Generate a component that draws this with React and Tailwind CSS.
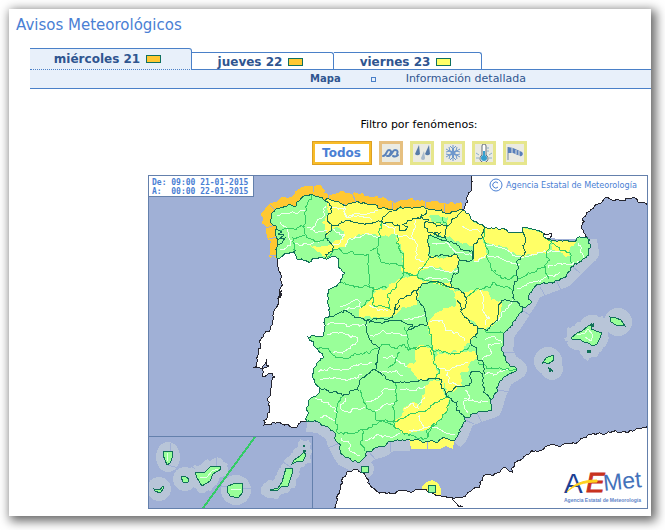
import React from "react";

const tabs = [
  { label: "miércoles 21", level: "orange", active: true },
  { label: "jueves 22", level: "orange", active: false },
  { label: "viernes 23", level: "yellow", active: false },
];

// Coordinates of the map are x,y pairs on a 500 x 334 canvas that starts at 148,175
const SPAIN =
  "271,219 271,214 277,208 286,207 295,207 297,202 300,200 304,196 310,194 318,196 325,201 340,203 355,203 367,204 382,208 393,210 404,208 415,207 428,209 437,211 445,213 455,212 462,210 470,216 472,220 485,227 497,228 513,232 523,232 523,227 532,229 543,233 547,239 560,240 570,242 577,238 587,237 588,243 591,246 589,253 578,263 570,271 563,278 548,283 533,289 528,299 532,302 523,307 520,313 513,322 505,332 503,343 503,352 508,363 517,369 503,378 497,392 490,400 492,410 477,413 465,418 461,428 458,435 453,441 445,438 438,442 427,441 410,440 390,441 382,447 368,451 365,457 358,463 345,457 340,450 337,442 335,433 328,427 320,423 307,422 306,408 311,398 320,392 319,387 313,378 314,368 323,358 316,348 308,337 323,336 324,328 325,318 329,316 329,293 328,290 338,284 345,273 338,265 337,258 323,258 310,262 298,260 295,251 286,253 277,258 277,247 278,241 275,235 277,228 273,225";

const PORTUGAL =
  "277,258 278,267 281,278 281,287 278,298 282,290 279,302 273,320 268,332 260,343 258,355 255,367 262,368 265,364 267,359 269,366 262,368 262,376 272,373 275,377 272,380 271,395 270,410 264,425 273,422 282,424 293,427 300,423 307,422";

const FRANCE_WEST = "473,175 471,188 468,202 462,210";
const FRANCE_EAST = "587,237 582,225 583,218 588,212 598,204 607,197 612,200 624,201 626,198 633,197 638,202 648,205";
const AFRICA =
  "333,509 340,490 347,472 358,470 365,475 370,485 378,492 392,494 402,491 410,492 423,489 432,493 442,497 452,497 463,497 477,488 483,477 497,473 503,468 512,472 518,460 530,453 550,445 573,442 580,440 593,433 602,434 615,430 630,430 648,426";

const EAST_COAST =
  "587,240 589,253 578,263 563,278 533,289 528,299 513,322 505,332 503,352 508,363 517,369 503,378 497,392 492,408 477,413 465,418 458,435 453,441";
const SOUTH_COAST = "410,441 390,441 382,447 368,451 358,463 345,457 337,442 335,433 320,423 307,422";

const ORANGE_SEA =
  "270,258 270,240 266,230 266,226 262,224 262,212 268,205 280,198 290,197 300,189 308,186 318,185 328,194 352,194 354,192 362,193 372,197 393,202 413,198 427,202 437,201 447,204 461,202 462,213 445,216 415,211 393,214 355,207 325,205 310,198 300,204 295,210 277,212 275,218 277,226 279,235 281,247 277,258";

const YELLOW_ZONES = [
  // cantabrian strip, Leon, Burgos, Alava and Navarra
  "325,200 355,201 382,206 393,208 415,205 445,211 462,208 472,218 485,227 482,238 474,247 465,243 447,237 428,235 428,255 441,258 457,255 459,262 453,272 447,271 436,268 418,272 412,275 402,272 403,255 397,242 397,235 381,236 365,234 357,235 350,238 345,247 332,250 327,258 318,252 310,245 332,243 340,240 345,235 341,229 332,229 326,238 325,228 322,222 329,215",
  "474,245 482,238 487,257 475,262 472,255",
  // Pyrenees
  "485,227 497,227 513,231 523,227 543,233 547,239 552,242 548,252 525,256 523,257 510,252 505,247 497,246 485,243 482,238",
  "551,240 560,240 570,241 577,239 570,249 571,257 566,257 560,250 551,251",
  // central range
  "375,288 387,288 400,279 412,275 427,280 450,282 456,290 450,290 440,285 423,283 418,291 417,305 402,307 397,314 387,317 358,318 361,308 370,300",
  // Teruel
  "453,290 463,293 473,290 480,288 489,292 491,300 501,301 498,320 486,331 478,327 463,315 456,307 454,298",
  // Cuenca
  "457,305 463,315 470,322 478,328 476,336 470,343 460,352 445,352 432,350 431,337 428,327 430,319 438,312 446,308",
  // Albacete
  "437,352 460,352 475,349 478,360 470,363 468,372 460,373 462,385 452,391 447,395 442,380 435,380 440,370 433,362",
  // Ciudad Real
  "417,348 425,346 435,349 433,363 438,372 435,380 420,380 413,372 407,367 410,363 416,362",
  // Jaen and Granada
  "432,381 442,380 444,393 449,398 448,410 438,422 432,427 427,430 408,434 400,430 394,427 395,420 402,415 403,408 413,402 420,406 425,390",
];

const GREEN_ZONES = [
  "429,217 438,215 448,217 446,225 438,223 433,223",
  "430,236 440,237 460,245 472,250 472,259 461,260 460,252 448,247 435,243",
  "421,270 433,267 447,271 453,274 451,280 432,277 418,274",
];

const COMMUNITY_LINES = [
  "325,201 332,211 327,218 332,226 326,238 333,248 325,258",
  "332,225 345,221 357,222 368,223 380,222 387,214 392,211",
  "381,221 392,222 400,226 399,230 405,231 408,227 402,225 410,220 416,219 422,215 427,210",
  "422,214 423,219 429,220 424,226 428,232 437,236 446,239 447,226 455,218 462,211",
  "434,232 440,233 438,236 434,234",
  "447,226 440,226 428,222",
  "428,236 428,255 434,257 443,255 449,257 457,255 460,260 472,260 474,253 463,250 456,243 447,241 437,238 428,236",
  "485,227 482,238 473,247 472,258",
  "460,260 458,273 452,278 451,287 460,290 467,298 465,308 460,310",
  "452,287 442,283 433,281 424,283 417,290 405,297 395,305 396,310 400,305",
  "395,307 393,318 380,318 367,320 378,323 392,321 403,322 413,325 408,330 418,326 427,325",
  "418,288 417,300 424,308 426,317 427,325",
  "323,318 335,315 345,310 352,315 367,320 366,330 373,344 380,348 378,358 375,370 360,380 358,390 354,390 343,396 333,392 320,388",
  "375,370 385,376 395,383 410,382 425,380 442,380 441,388 446,395 457,402 456,410 465,418",
  "446,395 460,387 471,383 470,375 476,371 483,374 483,392 491,400",
  "457,300 463,315 470,323 478,328 476,337 470,343 477,350 478,360 484,364 485,374",
  "478,328 487,331 498,320 498,309 502,300 515,301 523,307",
  "523,232 525,243 524,255 518,260 517,272 518,278 513,287 515,300",
];

const PROVINCE_LINES = [
  "312,195 307,205 305,222 306,235 318,242 329,238",
  "280,231 290,228 305,226",
  "305,236 293,238 295,251",
  "327,258 335,249 350,252 368,254 369,268 370,287 387,288",
  "370,251 378,246 382,222",
  "378,248 381,262 392,263 402,265 403,273 412,275",
  "397,235 396,243 404,255 404,273 418,274 430,257",
  "340,282 352,285 364,286 374,288 370,300 361,308",
  "373,288 373,305 382,306 390,309 387,295 397,283 403,273",
  "417,275 427,280 440,283 452,287",
  "433,223 441,224 447,226 442,217",
  "485,227 484,240 486,256 490,267 500,275 507,279 517,275",
  "467,297 475,290 490,288 493,282 505,287 513,291",
  "518,278 532,272 545,268 550,260 546,252 552,242 548,240",
  "546,266 548,279",
  "552,243 560,250 570,253 572,263",
  "315,347 325,348 333,355 345,358 358,355 370,353 380,347 384,344 392,348 404,344 408,350 417,348",
  "405,327 408,340 409,350 420,347 432,347 432,355",
  "428,326 431,338 432,350 445,351 460,353 470,345",
  "434,350 434,364 440,371 435,380",
  "360,390 364,400 366,408 375,412 376,420 382,420",
  "395,383 397,397 394,410 396,428",
  "343,396 337,405 337,432",
  "337,432 350,434 362,430 372,427 382,421 395,422 412,413 430,408 440,400 449,395",
  "362,430 360,443 365,451",
  "383,421 393,425 403,433 427,438 432,427 440,420 448,410 449,400",
  "428,438 427,430 435,423",
  "485,330 492,333 503,333",
  "478,362 490,369 516,369",
  "388,368 400,352",
];

const ZONE_LINES = [
  "277,215 295,213 305,211",
  "280,222 288,229 291,245 280,250",
  "293,243 308,245 322,240",
  "307,228 318,232 327,230",
  "326,206 322,218 310,230",
  "329,209 345,208 345,215 360,214 378,210",
  "345,206 347,218 362,216 372,220",
  "333,229 345,235 340,243 332,243",
  "345,247 350,238 365,234 381,236",
  "383,225 395,228 397,235 407,236 415,239",
  "397,235 396,243 404,255",
  "415,220 412,235 418,245 415,258 424,262",
  "432,243 445,243 460,252 472,256",
  "418,269 433,267 447,272 458,270",
  "425,280 436,278 452,281",
  "462,226 472,230 480,232",
  "474,262 490,257 500,258 510,262 520,264",
  "486,243 500,247 510,252 524,257",
  "525,257 540,252 549,252 560,251",
  "548,268 556,265 568,264 579,261",
  "578,243 580,250 584,258",
  "480,290 484,300 482,310 490,318 485,325",
  "495,322 502,312 508,308 513,300",
  "517,288 530,282 543,279 560,272",
  "340,306 350,303 357,299 360,307 345,309",
  "327,325 340,323 352,325 367,326",
  "327,334 345,334 358,338 355,345 345,351 333,352",
  "318,372 330,367 345,369 358,366 372,362",
  "320,379 335,377 350,380 362,375",
  "315,398 325,402 335,408 337,413",
  "320,418 328,417 336,420",
  "345,398 340,408 350,413 365,407",
  "366,401 378,398 386,388 395,390",
  "372,412 380,409 384,405 395,404",
  "365,441 375,436 390,437 400,433",
  "341,438 350,444 352,452 360,455",
  "383,357 395,358 404,363 407,367",
  "380,371 393,371 403,375",
  "370,335 384,331 400,334 408,337",
  "430,321 442,320 445,330 458,333 465,341",
  "436,365 450,370 460,366 468,362",
  "447,372 450,384 460,385",
  "404,409 413,403 418,408 425,397",
  "409,430 422,429 434,427 455,434",
  "420,415 423,428",
  "464,398 475,402 488,401",
  "485,375 497,374 508,370",
  "483,360 492,353 488,345 500,343",
  "485,340 495,337 502,343",
  "465,390 470,398 463,403 468,413",
  "400,390 413,390 425,386",
  "369,305 378,311 388,311",
  "404,320 414,318 425,314",
];

const SEA_DIVIDERS = "M540 287l6 10M556 280l5 10M572 266l8 7M521 310l11 6M506 331l-3 0M503 352h12M498 390l12 2M477 413l5 10M463 419l11 5M390 441v11M340 443l-12 5M368 451l8 9M313 185v7M328 194v8M352 193l4 9M392 202v8M425 201v7M444 204v9M270 205l6 6M266 228l9 -3M269 239l8 -2M270 255h8M427 440v10";

const BALEARICS = [
  "571,338 577,333 582,331 588,326 593,324 591,329 599,332 602,332 600,338 597,344 593,346 588,343 584,342 579,339 573,340",
  "610,317 616,318 621,320 625,326 616,325 611,322",
  "542,364 546,358 553,355 554,360 548,364 544,362",
];

const CANARIES = [
  "163,451 172,451 173,456 170,463 167,465 163,455",
  "154,489 160,490 163,486 164,488 160,493 155,491",
  "181,477 185,476 189,479 188,482 183,482",
  "195,472 205,472 210,467 220,466 221,469 213,474 210,481 202,486 197,478",
  "228,486 233,484 242,483 243,492 238,498 230,496 227,491",
  "286,468 293,468 292,474 288,486 281,487 277,491 270,490 278,488 282,482",
  "292,464 294,460 300,456 304,452 306,455 303,461 296,462",
];

function noise(x, y) {
  const n = Math.sin(x * 12.9898 + y * 78.233) * 43758.5453;
  return (n - Math.floor(n)) * 2 - 1;
}

// Breaks a line into small uneven steps, always the same way for the same two ends
function split(a, b, depth) {
  const dx = b[0] - a[0];
  const dy = b[1] - a[1];
  const length = Math.hypot(dx, dy);
  if (depth === 0 || length < 3) return [b];
  const k = noise(a[0] + b[0], a[1] + b[1]) * (length > 9 ? 0.12 : 0.28);
  const mid = [(a[0] + b[0]) / 2 - dy * k, (a[1] + b[1]) / 2 + dx * k];
  return [...split(a, mid, depth - 1), ...split(mid, b, depth - 1)];
}

function rough(text, closed = false) {
  const pts = text.split(" ").map((p) => p.split(",").map(Number));
  if (closed) pts.push(pts[0]);
  let out = [pts[0]];
  for (let i = 1; i < pts.length; i++) {
    out = out.concat(split(pts[i - 1], pts[i], 4));
  }
  return out.map((p) => `${p[0].toFixed(1)},${p[1].toFixed(1)}`).join(" ");
}

const Lines = ({ list, color }) => (
  <g fill="none" stroke={color}>
    {list.map((l) => (
      <polyline key={l} points={rough(l)} />
    ))}
  </g>
);

const WarningMap = () => (
  <svg
    className="block w-full max-w-[500px]"
    viewBox="148 175 500 334"
    role="img"
    aria-label="Mapa de avisos"
  >
    <defs>
      <clipPath id="land">
        <polygon points={rough(SPAIN, true)} />
      </clipPath>
    </defs>
    <g shapeRendering="crispEdges">
      <rect x="148" y="175" width="500" height="334" fill="#a0b0d6" />

      {/* coastal waters */}
      <g fill="none" stroke="#b8c5d8" strokeWidth="20" strokeLinejoin="round">
        <polyline points={EAST_COAST} />
        <polyline points={SOUTH_COAST} />
        <circle cx="365" cy="469" r="4" strokeWidth="10" />
      </g>
      <g fill="#b8c5d8">
        <polygon points={rough("564,338 568,327 580,322 590,315 602,316 609,328 609,338 603,348 596,357 588,361 583,356 578,350 568,346", true)} />
        <circle cx="618" cy="322" r="14" />
        <circle cx="548" cy="361" r="14" />
        <circle cx="552" cy="369" r="11" />
      </g>
      <polygon points={rough(ORANGE_SEA, true)} fill="#ffc832" />
      <polygon points="409,438 455,434 453,449 446,446 440,449 411,449" fill="#ffff66" />
      <path d="M422 492v-5l4-5 6-2 6 3 3 6v7z" fill="#ffff66" />
      <path d={SEA_DIVIDERS} fill="none" stroke="#a0b0d6" />

      {/* neighbouring land */}
      <g fill="#fff">
        <polygon points={`${rough(PORTUGAL)} 330,400 350,270 330,250 285,250`} />
        <polygon points={`${rough(FRANCE_WEST)} 480,235 587,240 ${rough(FRANCE_EAST)} 648,175`} />
        <polygon points={`${rough(AFRICA)} 648,509`} />
      </g>
      <Lines
        list={[PORTUGAL, FRANCE_WEST, FRANCE_EAST, AFRICA, "452,497 456,503 463,507", "543,233 551,233 550,238 547,239"]}
        color="#25252f"
      />

      <polygon points={rough(SPAIN, true)} fill="#99ff99" />
      <g clipPath="url(#land)">
        {YELLOW_ZONES.map((z) => (
          <polygon key={z} points={rough(z, true)} fill="#ffff66" />
        ))}
        {GREEN_ZONES.map((z) => (
          <polygon key={z} points={rough(z, true)} fill="#99ff99" />
        ))}
        <Lines list={ZONE_LINES} color="#f0fff0" />
        <Lines list={PROVINCE_LINES} color="#33cc66" />
        <Lines list={COMMUNITY_LINES} color="#107058" />
      </g>
      <polygon points={rough(SPAIN, true)} fill="none" stroke="#107058" />
      <path d="M276 229l6 3-4 2 6 1-5 4 6-1-3 5-4 2" fill="none" stroke="#107058" />
      <g fill="#99ff99" stroke="#107058">
        <rect x="361" y="466" width="7" height="6" />
        <rect x="428" y="485" width="7" height="7" />
        {BALEARICS.map((z) => (
          <polygon key={z} points={z} />
        ))}
      </g>
      <path d="M577 335l8-2 3-4 5 6-2 6-6-4" fill="none" stroke="#e6ffe6" />
      <path d="M548 368l5 3M549 371h2M588 351h2v1h-2zM591 324l3 2" fill="none" stroke="#107058" strokeWidth="2" />

      {/* Canary Islands */}
      <rect x="148" y="436" width="164" height="73" fill="#a0b0d6" />
      <g fill="#b8c5d8">
        <ellipse cx="168" cy="457" rx="12" ry="15" />
        <circle cx="159" cy="489" r="12" />
        <circle cx="185" cy="479" r="12" />
        <polygon points={rough("192,466 202,463 210,461 220,458 228,464 228,474 218,482 211,491 202,493 194,488", true)} />
        <circle cx="236" cy="490" r="15" />
        <polygon points={rough("297,448 300,439 308,439 311,444 311,463 300,470 296,485 286,493 276,499 266,497 261,490 265,483 273,481 281,465", true)} />
      </g>
      <path d="M170 443v8M168 465l10 3M189 464l6 5M216 458v8M218 486h12M283 462l9 6M243 488h8" stroke="#a0b0d6" />
      <g fill="#99ff99" stroke="#107058">
        {CANARIES.map((z) => (
          <polygon key={z} points={z} />
        ))}
        <path d="M303 446h2M303 451h3" strokeWidth="2" />
      </g>
      <path d="M168 453l-1 8M200 477l7 0 5-6 6-2M231 490l5-1 5 1" fill="none" stroke="#e6ffe6" />
      <path d="M203 508L255 437" stroke="#33cc66" strokeWidth="2" />
      <path d="M148 436H312V508" fill="none" stroke="#6480ac" />

      <rect x="148" y="175" width="106" height="22" fill="#6480ac" />
      <rect x="149" y="176" width="104" height="20" fill="#fff" />
      <path d="M148 175h500v334H148zM149 176v332h498V176z" fill="#6480ac" fillRule="evenodd" />
    </g>

    <g
      fill="#4a80d4"
      className="font-['DejaVu_Sans_Mono','Liberation_Mono',monospace] text-[8px] font-bold"
    >
      <text x="152" y="185">De: 09:00 21-01-2015</text>
      <text x="152" y="194">{"A:\u00a0\u00a000:00 22-01-2015"}</text>
    </g>
    <g fill="#4a80d4">
      <circle cx="496" cy="185" r="6" fill="none" stroke="#4a80d4" />
      <path d="M498 183a3 3 0 1 0 0 4" fill="none" stroke="#4a80d4" />
      <text x="506" y="188" className="font-['DejaVu_Sans_Condensed','DejaVu_Sans',sans-serif] text-[9px]">
        Agencia Estatal de Meteorología
      </text>
    </g>

    {/* agency logo */}
    <g className="font-['Liberation_Sans',sans-serif]">
      <text x="564" y="493" className="text-[28px]" fill="#1c3f94">A</text>
      <text x="586" y="492" className="text-[28px] italic" fill="#c8321e" stroke="#c8321e">E</text>
      <text x="604" y="491" className="text-[23px]" fill="#4472ba" transform="rotate(-6 604 491)">Met</text>
      <path d="M567 492C573 484 583 480 597 480L597 482C584 482 574 485 567 492Z" fill="#ffd21c" stroke="#ffd21c" />
      <text x="564" y="502" className="text-[5px] font-bold" fill="#5f84c8">
        Agencia Estatal de Meteorología
      </text>
    </g>
  </svg>
);

const phenomena = [
  {
    name: "Costeros",
    frame: "border-[#e6c080]",
    icon: (
      <g fill="none" stroke="#5a82ba" strokeWidth="2" strokeLinecap="round">
        <path d="M1 12c4 0 3-6 6-6 2 0 3 2 1 4M5 12c5 1 5-6 8-6 3 0 3 2 2 4M11 12c2 1 4 0 5-1" />
      </g>
    ),
  },
  {
    name: "Lluvias",
    frame: "border-[#e6e68c]",
    icon: (
      <g>
        <path d="M6 1l1 9a3 3 0 0 1-5 0z" fill="#587ca8" />
        <path d="M11 7l1 7a2 2 0 0 1-4 0z" fill="#a8bacb" />
        <path d="M16 1l1 9a3 3 0 0 1-5 0z" fill="#587ca8" />
      </g>
    ),
  },
  {
    name: "Nevadas",
    frame: "border-[#e6e68c]",
    icon: (
      <g fill="none" stroke="#6f98cc">
        <path d="M9 1v16M2 5l14 8M16 5L2 13M6 2l3 3 3-3M6 16l3-3 3 3M2 8l4-1-1-4M16 8l-4-1 1-4M2 10l4 1-1 4M16 10l-4 1 1 4" />
        <path d="M9 5v8M6 7l6 4M12 7l-6 4" strokeWidth="2" />
      </g>
    ),
  },
  {
    name: "Temperaturas",
    frame: "border-[#e6e68c]",
    icon: (
      <g>
        <path d="M7 2a2 2 0 0 1 4 0v9a4 4 0 1 1-4 0z" fill="#fff" stroke="#626c78" />
        <circle cx="9" cy="14" r="3" fill="#369fcd" />
        <path d="M9 7v6" stroke="#369fcd" strokeWidth="2" />
        <path d="M1 9l3 2M1 14h3M17 9l-3 2M17 14h-3M12 4h2M12 7h2" stroke="#8cb0c8" />
      </g>
    ),
  },
  {
    name: "Vientos",
    frame: "border-[#e6e68c]",
    icon: (
      <g>
        <path d="M2 3v13" stroke="#74889e" strokeWidth="1" />
        <path d="M2 3l5 1 9 4c2 2 0 5-2 4L7 9 2 9z" fill="#587fba" />
        <path d="M6 4v5M10 6v4M13 7v5" stroke="#ebebe2" strokeWidth="1" />
      </g>
    ),
  },
];

const Level = ({ level }) => (
  <span
    className={`inline-block h-2 w-[15px] border border-[#0f7060] ${
      level === "orange" ? "bg-[#ffc832]" : "bg-[#ffff66]"
    }`}
  />
);

const App = () => {
  return (
    <div className="bg-white pt-[9px] pr-[14px] pb-[14px] pl-[9px] font-['DejaVu_Sans',Verdana,sans-serif]">
      <main className="bg-white pb-[7px] shadow-[3px_3px_10px_2px_rgba(0,0,0,0.6)]">
        <h1 className="px-[7px] pt-1.5 text-[15px] leading-5 text-[#4a80d4]">
          Avisos Meteorológicos
        </h1>

        <div className="mt-[13px] ml-[21px]">
          <nav className="flex items-end text-[12px] leading-4 font-bold text-[#2f5590]">
            {tabs.map((tab) => (
              <button
                key={tab.label}
                type="button"
                className={
                  tab.active
                    ? "flex h-[22px] w-[162px] items-center justify-center gap-1.5 rounded-tr-[3px] border-t border-r border-b border-t-[#4a80c8] border-r-[#4a80c8] border-b-[#4a80c8] [border-bottom-style:dotted] bg-[#e8f0fa] pr-1.5"
                    : "flex h-[18px] w-[142px] items-center justify-center gap-1.5 rounded-tr-[3px] border-t border-r border-[#4a80c8] pr-1 last:w-[148px]"
                }
              >
                {tab.label}
                <Level level={tab.level} />
              </button>
            ))}
          </nav>
          <div className="flex">
            <div className="w-[162px]" />
            <div className="-mt-px h-px flex-1 bg-[#4a80c8]" />
          </div>
          <div className="flex h-[19px] items-center justify-center gap-[30px] border-b border-[#4a80c8] bg-[#e8f0fa] pl-[155px] text-[11px] leading-4 text-[#2f5590]">
            <a href="#mapa" className="text-[10px] font-bold">Mapa</a>
            <span className="size-[5px] border border-[#4a80c8]" />
            <a href="#detalle">Información detallada</a>
          </div>
        </div>

        <section className="mt-7 flex flex-col items-center pl-[178px]">
          <p className="text-[11px] leading-4 text-black">Filtro por fenómenos:</p>
          <div className="mt-2 flex gap-[7px]">
            <button
              type="button"
              className="h-6 w-[60px] border-3 border-[#f8bc28] bg-white text-[12px] leading-4 font-bold text-[#4a80d4] outline-1 -outline-offset-1 outline-[#dca024]"
            >
              Todos
            </button>
            {phenomena.map((p) => (
              <button
                key={p.name}
                type="button"
                aria-label={p.name}
                className={`size-6 border-3 bg-[#ebebe2] ${p.frame}`}
              >
                <svg viewBox="0 0 18 18" className="size-[18px]">
                  {p.icon}
                </svg>
              </button>
            ))}
          </div>
        </section>

        <div className="mt-2.5 flex justify-end pr-[3px]">
          <WarningMap />
        </div>
      </main>
    </div>
  );
};

export default App;
